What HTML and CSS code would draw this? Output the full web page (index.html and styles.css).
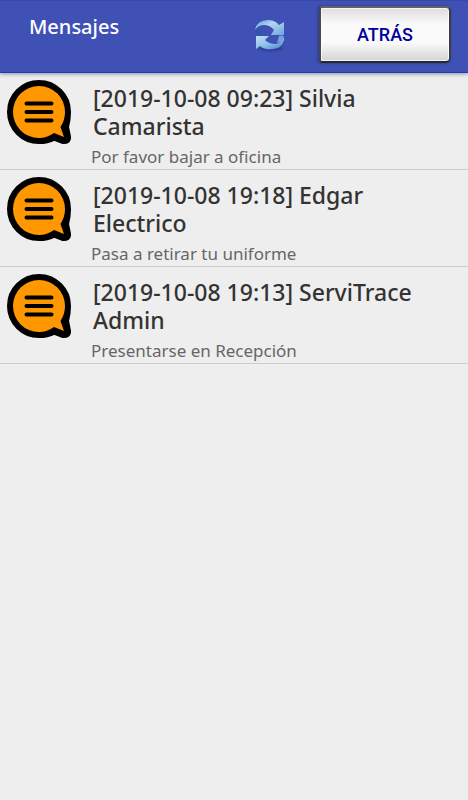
FILE: index.html
```html
<!DOCTYPE html>
<html lang="es">
<head>
<meta charset="utf-8">
<meta name="viewport" content="width=device-width, initial-scale=1">
<title>Mensajes</title>
<link rel="stylesheet" href="styles.css">
</head>
<body>
<svg class="defs" aria-hidden="true">
  <symbol id="bubble" viewBox="0 0 66 66">
    <path d="M33 4.500A28.500 28.500 0 1 0 33 61.500Q41 61.500 48 58L57 61.500Q62 62 61.500 58L59.500 48Q61.500 41 61.500 33A28.500 28.500 0 0 0 33 4.500Z" fill="#000" stroke="#000" stroke-width="7" stroke-linejoin="round"/>
    <path d="M33 7A26 26 0 1 0 33 59Q41 59 48 54L58 58L54.500 48Q59 41 59 33A26 26 0 0 0 33 7Z" fill="#ff9800"/>
    <path d="M20.500 24.500H45.500M20.500 33H45.500M20.500 41.500H45.500" stroke="#000" stroke-width="4" stroke-linecap="round"/>
  </symbol>
</svg>
<header class="bar">
  <h1 class="bar-title">Mensajes</h1>
  <button class="refresh" type="button" aria-label="Actualizar">
    <svg viewBox="0 0 34 36" width="34" height="36" aria-hidden="true">
      <defs>
        <linearGradient id="top" x1="0" y1="0" x2="1" y2="1"><stop offset="0" stop-color="#5c9bd8"/><stop offset=".4" stop-color="#b4d5f1"/><stop offset="1" stop-color="#6da6dc"/></linearGradient>
        <linearGradient id="bottom" x1="0" y1="0" x2="1" y2="1"><stop offset="0" stop-color="#c3dff6"/><stop offset=".55" stop-color="#8abbe6"/><stop offset="1" stop-color="#4584c8"/></linearGradient>
        <filter id="soft" x="-30%" y="-100%" width="160%" height="300%"><feGaussianBlur stdDeviation="1.500"/></filter>
      </defs>
      <ellipse cx="18" cy="31" rx="12" ry="2.500" fill="#26378c" filter="url(#soft)"/>
      <path d="M3 12Q3 20 9 19L7 13Q8 9 12 10Z" fill="#2c56ab"/>
      <path d="M31 24Q32 17 26 19L24 26Z" fill="#7d9de0"/>
      <path d="M2 13Q4 3 15 3Q22 3 26 8L31 5V18H18L21 13Q17 8 11 8Q5 8 2 13Z" fill="url(#top)"/>
      <path d="M3 19H16L12 23Q16 27 23 27Q28 26 31 21Q30 32 19 32Q12 33 7 29L3 32Z" fill="url(#bottom)"/>
    </svg>
  </button>
  <button class="back" type="button">ATRÁS</button>
</header>
<main>
  <ul class="messages">
    <li class="message">
      <svg class="avatar" aria-hidden="true"><use href="#bubble"/></svg>
      <div class="body">
        <h2 class="title">[2019-10-08 09:23] Silvia Camarista</h2>
        <p class="text">Por favor bajar a oficina</p>
      </div>
    </li>
    <li class="message">
      <svg class="avatar" aria-hidden="true"><use href="#bubble"/></svg>
      <div class="body">
        <h2 class="title">[2019-10-08 19:18] Edgar Electrico</h2>
        <p class="text">Pasa a retirar tu uniforme</p>
      </div>
    </li>
    <li class="message">
      <svg class="avatar" aria-hidden="true"><use href="#bubble"/></svg>
      <div class="body">
        <h2 class="title">[2019-10-08 19:13] ServiTrace Admin</h2>
        <p class="text">Presentarse en Recepción</p>
      </div>
    </li>
  </ul>
</main>
</body>
</html>
```
FILE: styles.css
```css
* {
  box-sizing: border-box;
}

body {
  margin: 0;
  background: #eeeeee;
  font-family: "Noto Sans", sans-serif;
}

h1, h2, p, ul {
  margin: 0;
  padding: 0;
}

.defs {
  position: absolute;
  width: 0;
  height: 0;
}

.bar {
  position: relative;
  display: flex;
  align-items: flex-start;
  height: 73px;
  padding: 5px 17px 0 29px;
  background: #3f51b5;
  border-top: 1px solid #3949a5;
  border-bottom: 1px solid #1c3cbc;
  box-shadow: 0 1px 4px rgba(0, 0, 0, 0.4);
}

.bar-title {
  flex: 1;
  padding-top: 7px;
  color: #ffffff;
  font-size: 20px;
  font-weight: 500;
  line-height: 28px;
}

.refresh {
  margin: 11px 32px 0 0;
  padding: 0;
  border: 0;
  background: none;
}

.refresh svg {
  display: block;
}

.back {
  width: 132px;
  height: 57px;
  padding: 0;
  border: 2px solid;
  border-color: #626262 #3d3d3d #292929 #484848;
  border-radius: 3px 5px 5px 3px;
  background: linear-gradient(#dddddd, #fafafa 30%, #fafafa 65%, #d4d4d4);
  box-shadow: inset 0 0 0 1px rgba(255, 255, 255, 0.7), -1px 0 3px rgba(20, 30, 80, 0.5);
  color: #00009c;
  font-family: Roboto, sans-serif;
  font-size: 18px;
  font-weight: 500;
}

.messages {
  list-style: none;
}

.message {
  display: flex;
  gap: 19px;
  padding: 6px 8px 0 6px;
  border-bottom: 1px solid #cccccc;
}

.avatar {
  flex: none;
  width: 66px;
  height: 66px;
}

.body {
  flex: 1;
  padding-top: 5px;
}

.title {
  padding: 0 40px 0 2px;
  color: #333333;
  font-size: 23px;
  font-weight: 500;
  line-height: 28px;
}

.text {
  padding-top: 5px;
  color: #666666;
  font-size: 17px;
  line-height: 24px;
}
```
